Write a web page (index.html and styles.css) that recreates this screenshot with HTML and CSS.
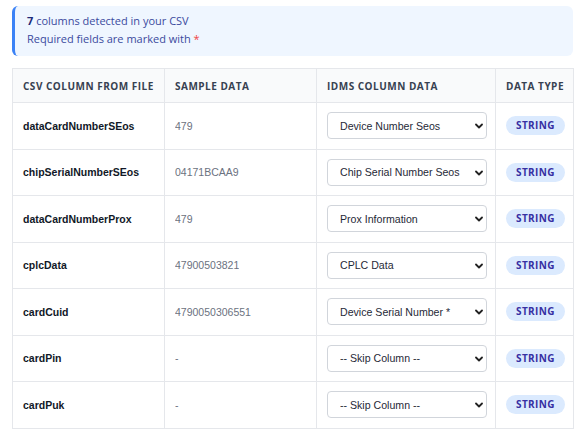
FILE: index.html
```html
<html lang="en">
  <head>
    <meta charset="UTF-8" />
    <meta name="viewport" content="width=device-width, initial-scale=1.0" />
    <title>CSV Column Mapping</title>
    <link rel="stylesheet" href="styles.css">
  </head>
  <body>
    <div class="wrapper">
      <div class="notice">
        <p><b>7</b> columns detected in your CSV</p>
        <p>Required fields are marked with <span class="req">*</span></p>
      </div>
      <table class="mapping">
        <colgroup>
          <col class="c1" />
          <col class="c2" />
          <col class="c3" />
          <col class="c4" />
        </colgroup>
        <thead>
          <tr>
            <th>CSV Column From File</th>
            <th>Sample Data</th>
            <th>IDMS Column Data</th>
            <th>Data Type</th>
          </tr>
        </thead>
        <tbody>
          <tr>
            <td class="name">dataCardNumberSEos</td>
            <td class="sample"><span>479</span></td>
            <td>
              <div class="picker">
                <select><option>Device Number Seos</option></select>
                <svg viewBox="0 0 8 6" width="8" height="6"><path d="M1 1.5l3 3 3-3" /></svg>
              </div>
            </td>
            <td><span class="badge">STRING</span></td>
          </tr>
          <tr>
            <td class="name">chipSerialNumberSEos</td>
            <td class="sample"><span>04171BCAA9</span></td>
            <td>
              <div class="picker">
                <select><option>Chip Serial Number Seos</option></select>
                <svg viewBox="0 0 8 6" width="8" height="6"><path d="M1 1.5l3 3 3-3" /></svg>
              </div>
            </td>
            <td><span class="badge">STRING</span></td>
          </tr>
          <tr>
            <td class="name">dataCardNumberProx</td>
            <td class="sample"><span>479</span></td>
            <td>
              <div class="picker">
                <select><option>Prox Information</option></select>
                <svg viewBox="0 0 8 6" width="8" height="6"><path d="M1 1.5l3 3 3-3" /></svg>
              </div>
            </td>
            <td><span class="badge">STRING</span></td>
          </tr>
          <tr>
            <td class="name">cplcData</td>
            <td class="sample"><span>47900503821</span></td>
            <td>
              <div class="picker">
                <select><option>CPLC Data</option></select>
                <svg viewBox="0 0 8 6" width="8" height="6"><path d="M1 1.5l3 3 3-3" /></svg>
              </div>
            </td>
            <td><span class="badge">STRING</span></td>
          </tr>
          <tr>
            <td class="name">cardCuid</td>
            <td class="sample"><span>4790050306551</span></td>
            <td>
              <div class="picker">
                <select><option>Device Serial Number *</option></select>
                <svg viewBox="0 0 8 6" width="8" height="6"><path d="M1 1.5l3 3 3-3" /></svg>
              </div>
            </td>
            <td><span class="badge">STRING</span></td>
          </tr>
          <tr>
            <td class="name">cardPin</td>
            <td class="sample"><span>-</span></td>
            <td>
              <div class="picker">
                <select><option>-- Skip Column --</option></select>
                <svg viewBox="0 0 8 6" width="8" height="6"><path d="M1 1.5l3 3 3-3" /></svg>
              </div>
            </td>
            <td><span class="badge">STRING</span></td>
          </tr>
          <tr>
            <td class="name">cardPuk</td>
            <td class="sample"><span>-</span></td>
            <td>
              <div class="picker">
                <select><option>-- Skip Column --</option></select>
                <svg viewBox="0 0 8 6" width="8" height="6"><path d="M1 1.5l3 3 3-3" /></svg>
              </div>
            </td>
            <td><span class="badge">STRING</span></td>
          </tr>
        </tbody>
      </table>
    </div>
  </body>
</html>
```
FILE: styles.css
```css
body {
  margin: 0;
  background: #fff;
  font-family: "Liberation Sans", Arial, sans-serif;
}
.wrapper {
  padding: 6px 7px 0 12px;
}
.notice {
  background: #eff6ff;
  border-left: 3px solid #3b82f6;
  border-radius: 6px;
  padding: 6px 13px 9px 12px;
  font-family: "Open Sans", sans-serif;
  font-size: 11px;
  line-height: 17.5px;
  color: #3b4a9e;
}
.notice p {
  margin: 0;
}
.notice b {
  color: #1e2a78;
  font-weight: 700;
}
.req {
  color: #ef4444;
}
.mapping {
  margin-top: 12px;
  border-collapse: collapse;
  table-layout: fixed;
  width: 561px;
  border: 1px solid #e5e7eb;
}
.c1 { width: 152px; }
.c2 { width: 152px; }
.c3 { width: 179px; }
.c4 { width: 78px; }
th {
  height: 34px;
  padding: 0 10px;
  background: #f9fafb;
  border: 1px solid #e5e7eb;
  text-align: left;
  font-family: "Open Sans", sans-serif;
  font-size: 10px;
  font-weight: 700;
  letter-spacing: 0.5px;
  text-transform: uppercase;
  color: #374151;
  white-space: nowrap;
}
td {
  height: 46.5px;
  padding: 0 10px;
  border: 1px solid #e5e7eb;
  font-size: 10.5px;
  vertical-align: middle;
  box-sizing: border-box;
}
.name {
  font-weight: 700;
  color: #111827;
}
.sample {
  color: #6b7280;
}
.sample span {
  display: inline-block;
  max-width: 76px;
  overflow: hidden;
  white-space: nowrap;
  vertical-align: middle;
}
.picker {
  position: relative;
  width: 160px;
}
.picker select {
  display: block;
  width: 160px;
  height: 27px;
  padding: 0 18px 0 12px;
  border: 1px solid #d1d5db;
  border-radius: 4px;
  background: #fff;
  appearance: none;
  -webkit-appearance: none;
  font-family: "Liberation Sans", Arial, sans-serif;
  font-size: 10.6px;
  color: #1f2937;
}
.picker svg {
  position: absolute;
  right: 4px;
  top: 11px;
  pointer-events: none;
}
.picker path {
  fill: none;
  stroke: #222;
  stroke-width: 1.8;
  stroke-linecap: round;
  stroke-linejoin: round;
}
.badge {
  display: inline-block;
  padding: 0 10px;
  height: 19px;
  line-height: 19px;
  border-radius: 10px;
  background: #dbeafe;
  color: #3730a3;
  font-family: "Open Sans", sans-serif;
  font-size: 10px;
  font-weight: 700;
  letter-spacing: 0.4px;
}
```
